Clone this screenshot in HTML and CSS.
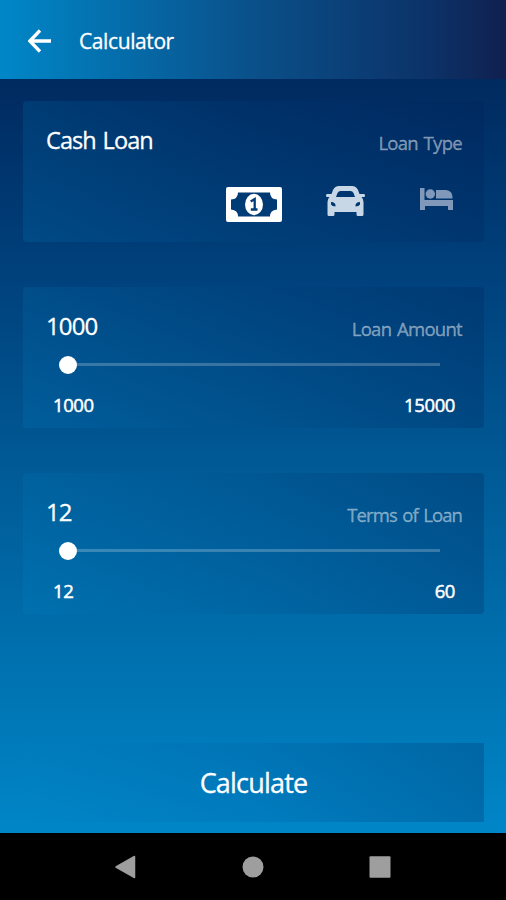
FILE: index.html
```html
<!DOCTYPE html>
<html lang="en">
<head>
  <meta charset="UTF-8" />
  <meta name="viewport" content="width=device-width, initial-scale=1.0" />
  <title>Calculator</title>
  <link rel="stylesheet" href="styles.css">
</head>
<body>
  <header class="topbar">
    <svg class="back" viewBox="0 0 24 24"><path d="M23 12H2M12 1.5L1.8 12L12 22.5" fill="none" stroke="#fff" stroke-width="3.3"/></svg>
    <h1>Calculator</h1>
  </header>

  <main class="content">
    <section class="card">
      <div class="card-head">
        <span class="value type">Cash Loan</span>
        <span class="label">Loan Type</span>
      </div>
      <div class="types">
        <svg class="cash" viewBox="0 0 56 35">
          <path fill="#fff" fill-rule="evenodd" d="M2 0H54Q56 0 56 2V33Q56 35 54 35H2Q0 35 0 33V2Q0 0 2 0ZM12 5.5Q12 12 5 12.5V22.5Q12 23 12 29.5H44Q44 23 51 22.5V12.5Q44 12 44 5.5Z"/>
          <ellipse cx="28" cy="17.5" rx="9" ry="10.7" fill="#fff"/>
          <path d="M24.7 14.5L28.7 12V22M24.8 22.5H31.5" fill="none" stroke="#003c76" stroke-width="2.3"/>
        </svg>
        <svg class="car" viewBox="0 0 39 30">
          <path fill="#c8d7e6" fill-rule="evenodd" d="M13 0H26Q30 0 32 4L33.5 8H38Q39 8 39 9.5Q39 11 38 11H35.5Q37.5 13 37.5 16V28.5Q37.5 30 36 30H32Q30.5 30 30.5 28.5V26H8.5V28.5Q8.5 30 7 30H3Q1.5 30 1.5 28.5V16Q1.5 13 3.5 11H1Q0 11 0 9.5Q0 8 1 8H5.5L7 4Q9 0 13 0ZM14.5 5Q12.5 5 11.5 7L10 11H29L27.5 7Q26.5 5 24.5 5ZM5 16V18.5Q6 20.5 9.5 20.5Q10 16 5 16ZM34 16Q29 16 29.5 20.5Q33 20.5 34 18.5Z"/>
        </svg>
        <svg class="bed" viewBox="0 0 33 22">
          <path fill="#8099bb" d="M0 0H4.5V12H33V22H28V18H5V22H0ZM16 2H26Q32.5 3 32.5 9V10.5H16Z"/>
          <circle cx="10.3" cy="6" r="4.7" fill="#8099bb"/>
        </svg>
      </div>
    </section>

    <section class="card">
      <div class="card-head">
        <span class="value">1000</span>
        <span class="label">Loan Amount</span>
      </div>
      <div class="slider"><span class="thumb"></span></div>
      <div class="range"><span>1000</span><span>15000</span></div>
    </section>

    <section class="card">
      <div class="card-head">
        <span class="value">12</span>
        <span class="label terms">Terms of Loan</span>
      </div>
      <div class="slider"><span class="thumb"></span></div>
      <div class="range"><span>12</span><span>60</span></div>
    </section>

    <button class="calculate">Calculate</button>
  </main>

  <nav class="navbar">
    <svg viewBox="0 0 24 24"><path d="M20.5 1.5V22.5L2 12Z" fill="#9e9e9e" stroke="#9e9e9e" stroke-width="1.5" stroke-linejoin="round"/></svg>
    <svg viewBox="0 0 24 24"><circle cx="12" cy="12" r="10.5" fill="#9e9e9e"/></svg>
    <svg viewBox="0 0 24 24"><rect x="1.5" y="1.3" width="21" height="21.5" rx="1" fill="#9e9e9e"/></svg>
  </nav>
</body>
</html>
```
FILE: styles.css
```css
* { box-sizing: border-box; }
body {
  margin: 0;
  height: 900px;
  display: flex;
  flex-direction: column;
  overflow: hidden;
  font-family: "Open Sans", "Noto Sans", sans-serif;
  -webkit-text-stroke: 0.3px;
  color: #fff;
  background: #000;
}
.topbar {
  height: 79px;
  flex: none;
  display: flex;
  align-items: center;
  gap: 27px;
  padding: 2px 28px 0;
  background: linear-gradient(to right, #0087c8, #0a508a 50%, #0c3268 85%, #10204f);
}
.topbar h1 { margin: 0; font-size: 21px; font-weight: 400; line-height: 28px; letter-spacing: -0.4px; }
.back { width: 24px; height: 24px; }
.content {
  height: 754px;
  flex: none;
  padding: 22px 22px 0 23px;
  background: linear-gradient(#002a60, #00407b 25%, #005c98 54%, #0078b7 85%, #0086c8);
}
.card {
  height: 141px;
  margin-bottom: 45px;
  padding: 22px 22px 0 23px;
  border-radius: 4px;
  background: linear-gradient(80deg, rgba(0, 134, 200, 0.18), rgba(0, 70, 130, 0.14) 50%, rgba(0, 30, 85, 0.25));
}
.card-head {
  display: flex;
  justify-content: space-between;
  height: 34px;
}
.value { font-size: 24px; line-height: 33px; letter-spacing: -0.9px; }
.type { font-size: 23.5px; line-height: 35px; word-spacing: 1.5px; }
.label { font-size: 18.5px; line-height: 39px; letter-spacing: -0.7px; word-spacing: 1.5px; color: rgba(255, 255, 255, 0.46); }
.terms { letter-spacing: -0.9px; }
.types {
  display: flex;
  justify-content: flex-end;
  align-items: flex-start;
  padding: 29px 9px 0 0;
}
.cash { width: 56px; height: 35px; margin-top: 1px; }
.car { width: 39px; height: 30px; margin-left: 44px; }
.bed { width: 33px; height: 22px; margin: 2px 0 0 55px; }
.slider {
  height: 3px;
  margin: 20px 22px 0;
  background: rgba(255, 255, 255, 0.22);
  display: flex;
  align-items: center;
}
.thumb {
  width: 18px;
  height: 18px;
  flex: none;
  margin-left: -9px;
  border-radius: 50%;
  background: #fff;
}
.range {
  display: flex;
  justify-content: space-between;
  padding: 26px 7px 0;
  font-size: 18.5px;
  line-height: 26px;
  letter-spacing: -0.4px;
  -webkit-text-stroke: 0.5px;
}
.calculate {
  display: block;
  width: 100%;
  height: 79px;
  margin-top: 129px;
  padding: 0;
  border: none;
  font: inherit;
  font-size: 27px;
  letter-spacing: -0.8px;
  color: #fff;
  background: linear-gradient(80deg, rgba(0, 134, 200, 0.1), rgba(0, 90, 160, 0.2) 50%, rgba(0, 70, 130, 0.4));
}
.navbar {
  flex: 1;
  display: flex;
  justify-content: center;
  align-items: center;
  gap: 103px;
  background: #000;
}
.navbar svg { width: 24px; height: 24px; }
```
